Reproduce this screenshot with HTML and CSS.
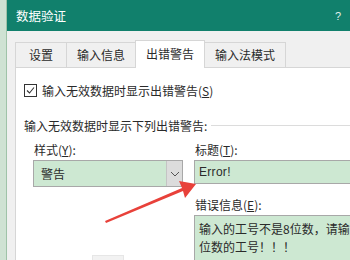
FILE: index.html
```html
<!DOCTYPE html>
<html lang="zh-CN">
<head>
  <meta charset="UTF-8" />
  <title>数据验证</title>
  <link rel="stylesheet" href="styles.css">
</head>
<body>
  <div class="page">
    <div class="sheet"></div>
    <div class="dialog">
      <div class="titlebar">
        <span class="title">数据验证</span>
        <span class="help">?</span>
      </div>
      <div class="body">
        <div class="tabs">
          <div class="tab">设置</div>
          <div class="tab">输入信息</div>
          <div class="tab active">出错警告</div>
          <div class="tab">输入法模式</div>
        </div>
        <div class="panel">
          <div class="check-row">
            <span class="checkbox">
              <svg width="11" height="11" viewBox="0 0 11 11"><path d="M2 5.5 L4.5 8 L9 2.5" fill="none" stroke="#333" stroke-width="1.1"/></svg>
            </span>
            <span>输入无效数据时显示出错警告(<u>S</u>)</span>
          </div>
          <div class="group-title">
            <span>输入无效数据时显示下列出错警告:</span>
            <span class="rule"></span>
          </div>
          <div class="fields">
            <div class="col-left">
              <div class="label">样式(<u>Y</u>):</div>
              <div class="select">
                <span class="select-text">警告</span>
                <span class="select-btn">
                  <svg width="10" height="6" viewBox="0 0 10 6"><path d="M1 1 L5 5 L9 1" fill="none" stroke="#555" stroke-width="1"/></svg>
                </span>
              </div>
              <div class="icon-btn"></div>
            </div>
            <div class="col-right">
              <div class="label">标题(<u>T</u>):</div>
              <div class="input">Error!</div>
              <div class="label second">错误信息(<u>E</u>):</div>
              <div class="textarea">输入的工号不是8位数，请输入8<br>位数的工号！！！</div>
            </div>
          </div>
        </div>
      </div>
    </div>
  </div>
  <svg class="arrow" width="350" height="260" viewBox="0 0 350 260">
    <path d="M105 221 L182 188 L179 181 L196 184 L185 198 L183 191 L106 223 Z" fill="#e8413a"/>
  </svg>
</body>
</html>
```

FILE: styles.css
```css
body { margin: 0; width: 350px; height: 260px; overflow: hidden; font-family: "Noto Sans CJK SC", "Liberation Sans", sans-serif; font-size: 12px; color: #2a2a2a; position: relative; }
.page { display: flex; height: 260px; }
.sheet { width: 6px; flex: none; background: #cfe2d3; border-right: 1px solid #9fc3a8; }
.dialog { flex: 1; min-width: 0; overflow: hidden; display: flex; flex-direction: column; background: #f0f0f0; }
.titlebar { flex: none; height: 31px; background: #11806c; color: #fff; display: flex; align-items: center; justify-content: space-between; padding: 0 9px 0 9px; font-size: 12.5px; }
.help { font-family: "Liberation Sans", sans-serif; font-size: 11px; color: #e0f0ec; }
.body { flex: 1; min-height: 0; padding: 11px 0 0 8px; display: flex; flex-direction: column; }
.tabs { flex: none; display: flex; height: 25px; align-items: flex-end; }
.tab { height: 24px; line-height: 24px; padding: 0 10px; border: 1px solid #d6d6d6; border-bottom: none; margin-right: -1px; background: #f0f0f0; text-align: center; }
.tab:first-child { width: 30px; }
.tab.active { background: #fff; height: 27px; line-height: 26px; position: relative; z-index: 1; margin-bottom: -1px; }
.panel { flex: 1; min-height: 0; background: #fff; border-left: 1px solid #d6d6d6; border-top: 1px solid #d6d6d6; padding: 15px 0 0 8px; }
.check-row { display: flex; align-items: center; gap: 5px; height: 15px; }
.checkbox { width: 11px; height: 11px; border: 1px solid #333; display: flex; align-items: center; justify-content: center; background: #fff; }
.group-title { display: flex; align-items: center; gap: 4px; margin-top: 19px; height: 16px; }
.rule { flex: 1; height: 1px; background: #dcdcdc; }
.fields { display: flex; gap: 11px; margin-top: 9px; }
.col-left { width: 150px; flex: none; padding-left: 9px; }
.col-right { flex: 1; min-width: 0; }
.label { height: 18px; line-height: 16px; margin-left: 1px; }
.label.second { margin-top: 13px; }
.select { height: 25px; border: 1px solid #a8a8a8; background: #cde8d2; display: flex; }
.select-text { flex: 1; line-height: 25px; padding-left: 7px; }
.select-btn { width: 15px; border-left: 1px solid #c4c4c4; background: #dcdcdc; display: flex; align-items: center; justify-content: center; }
.icon-btn { width: 30px; height: 10px; margin: 68px 0 0 59px; background: #f2f2f2; border: 1px solid #e6e6e6; }
.input { height: 22px; line-height: 22px; border: 1px solid #a8a8a8; border-right: none; background: #cde8d2; padding-left: 4px; font-family: "Liberation Sans", sans-serif; letter-spacing: 0.3px; }
.textarea { height: 60px; border: 1px solid #a8a8a8; border-right: none; background: #cde8d2; padding: 4px 0 0 4px; line-height: 18px; white-space: nowrap; overflow: hidden; }
.arrow { position: absolute; left: 0; top: 0; pointer-events: none; }
```
